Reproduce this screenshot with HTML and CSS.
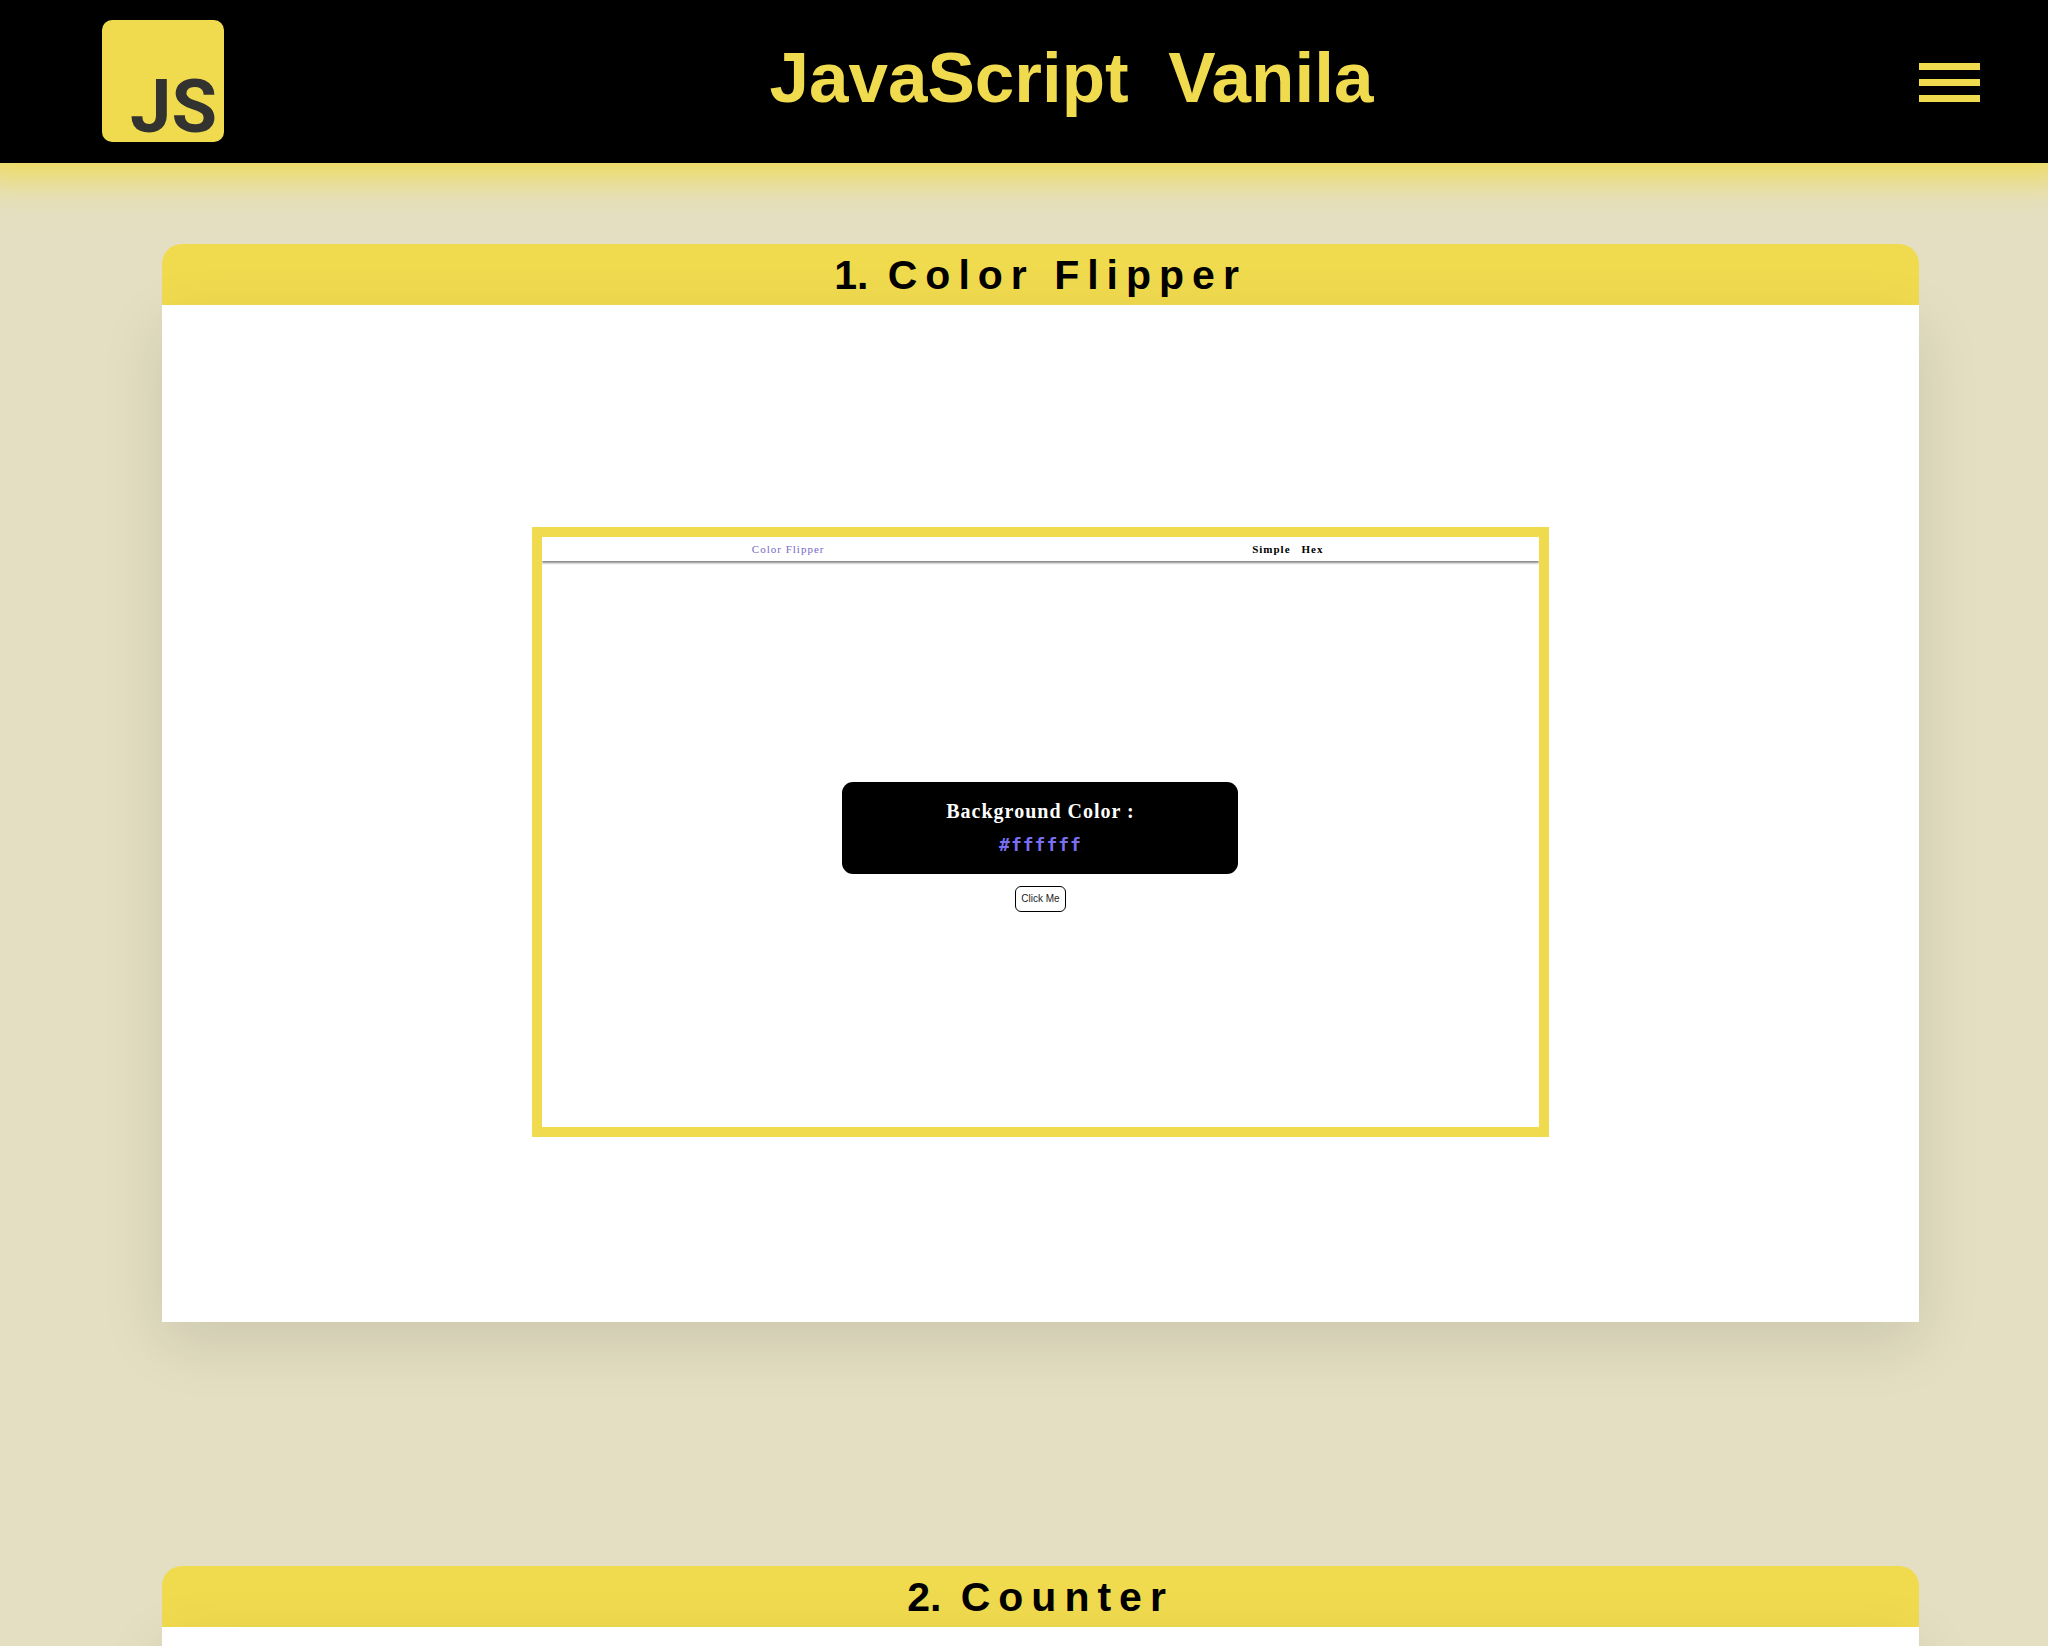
FILE: index.html
```html
<!DOCTYPE html>
<html lang="en">
<head>
<meta charset="utf-8">
<meta name="viewport" content="width=device-width, initial-scale=1">
<title>JavaScript Vanila</title>
<link rel="stylesheet" href="styles.css">
</head>
<body>
<header class="site-header">
  <a class="logo" href="#" aria-label="Home">
    <svg viewBox="0 0 122 122" width="122" height="122" aria-hidden="true">
      <rect width="122" height="122" rx="10" fill="#f0db4f"/>
      <text class="logo-text" x="115" y="112" text-anchor="end">JS</text>
    </svg>
  </a>
  <h1 class="site-title">JavaScript&nbsp; Vanila</h1>
  <button class="menu" type="button" aria-label="Menu">
    <span class="menu-bar"></span>
    <span class="menu-bar"></span>
    <span class="menu-bar"></span>
  </button>
</header>
<main class="projects">
  <section class="project">
    <h2 class="project-title"><span class="number">1.</span> Color Flipper</h2>
    <div class="project-body">
      <div class="preview">
        <nav class="preview-nav">
          <span class="brand">Color Flipper</span>
          <span class="links"><a href="#">Simple</a><a href="#">Hex</a></span>
        </nav>
        <div class="preview-main">
          <div class="color-box">
            <p class="color-label">Background Color :</p>
            <p class="color-value">#ffffff</p>
          </div>
          <button class="click" type="button">Click Me</button>
        </div>
      </div>
    </div>
  </section>
  <section class="project">
    <h2 class="project-title"><span class="number">2.</span> Counter</h2>
    <div class="project-body"></div>
  </section>
</main>
</body>
</html>
```
FILE: styles.css
```css
* {
  box-sizing: border-box;
  margin: 0;
  padding: 0;
}

html {
  height: 100%;
}

body {
  height: 100%;
  overflow: hidden;
  background: #e4dfc2;
  font-family: "Liberation Sans", Arial, sans-serif;
  color: #000;
}

.site-header {
  display: flex;
  align-items: center;
  justify-content: space-between;
  padding: 20px 68px 21px 102px;
  background: #000;
  box-shadow: 0 -8px 36px 22px #f0db4f;
}

.logo svg {
  display: block;
  overflow: visible;
}

.logo-text {
  font: 700 74px Roboto, sans-serif;
  fill: #323330;
}

.site-title {
  padding-bottom: 6px;
  font-size: 71px;
  line-height: 80px;
  color: #f0db4f;
}

.menu {
  display: flex;
  flex-direction: column;
  gap: 9px;
  width: 61px;
  padding-top: 2px;
  border: 0;
  background: none;
}

.menu-bar {
  height: 7px;
  background: #f0db4f;
}

.projects {
  display: flex;
  flex-direction: column;
  gap: 244px;
  padding: 81px 129px 0 162px;
}

.project-title {
  height: 61px;
  border-radius: 20px 20px 0 0;
  background: #f0db4f;
  font-size: 41px;
  line-height: 63px;
  letter-spacing: 8px;
  text-align: center;
}

.number {
  letter-spacing: 0;
}

.project-body {
  min-height: 1017px;
  padding: 222px 0 185px;
  background: #fff;
  box-shadow: 0 20px 60px rgba(0, 0, 0, 0.11);
}

.preview {
  display: flex;
  flex-direction: column;
  width: 57.9%;
  aspect-ratio: 5 / 3;
  margin: 0 auto;
  overflow: hidden;
  border: 10px solid #f0db4f;
  font-family: "Liberation Serif", "Times New Roman", serif;
}

.preview-nav {
  display: grid;
  grid-template-columns: 1fr 1fr;
  box-shadow: 0 2px 2px #888;
  font-size: 11px;
  line-height: 24px;
  letter-spacing: 1px;
  text-align: center;
}

.brand {
  padding-right: 6px;
  color: #7469c8;
}

.links {
  display: flex;
  justify-content: center;
  gap: 11px;
  padding-right: 4px;
  font-weight: bold;
}

.links a {
  color: #000;
  text-decoration: none;
}

.preview-main {
  display: flex;
  flex: 1;
  flex-direction: column;
  align-items: center;
  justify-content: center;
  gap: 12px;
  padding-top: 6px;
}

.color-box {
  width: 396px;
  max-width: 100%;
  padding: 12px;
  border-radius: 11px;
  background: #000;
  font-weight: bold;
  letter-spacing: 1px;
  text-align: center;
}

.color-label {
  font-size: 20px;
  line-height: 34px;
  color: #fff;
}

.color-value {
  font-family: "DejaVu Sans Mono", monospace;
  font-size: 18px;
  line-height: 34px;
  color: #7a6ff0;
}

.click {
  padding: 0 5px;
  border: 1px solid #000;
  border-radius: 6px;
  background: #fff;
  color: #222;
  font: 10px/24px "Liberation Sans", Arial, sans-serif;
}
```
